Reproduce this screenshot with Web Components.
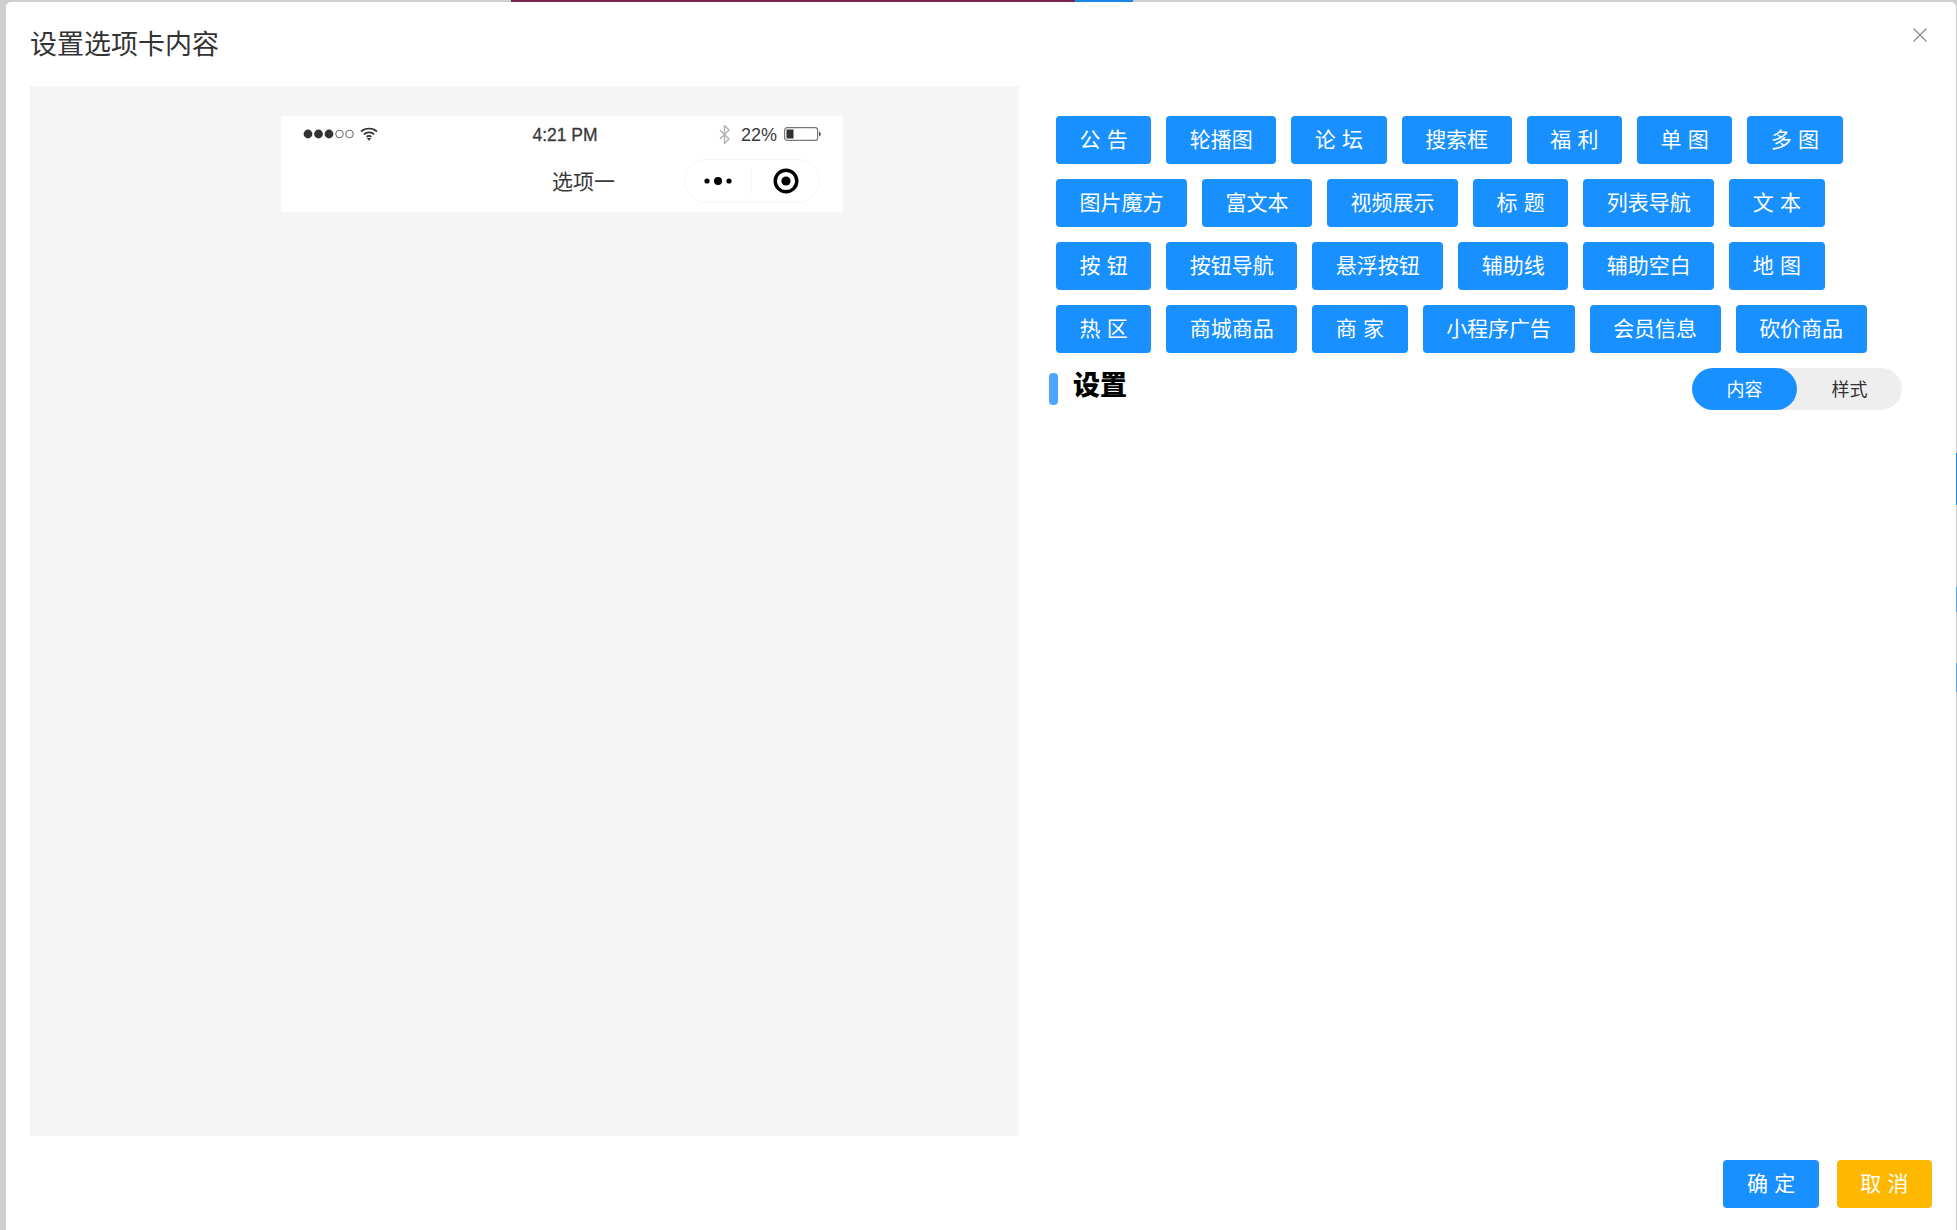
<!DOCTYPE html>
<html lang="zh">
<head>
<meta charset="utf-8">
<title>设置选项卡内容</title>
<style>
  html, body { margin: 0; height: 100%; }
  body {
    background: #cfcfcf;
    font-family: "Liberation Sans", "Noto Sans CJK SC", sans-serif;
    overflow: hidden;
  }
</style>
</head>
<body>

<c-backdrop>
  <c-dialog heading="设置选项卡内容">
    <c-phone slot="preview" tab="选项一"></c-phone>

    <c-palette slot="tools">
      <c-btn>公告</c-btn><c-btn>轮播图</c-btn><c-btn>论坛</c-btn><c-btn>搜索框</c-btn>
      <c-btn>福利</c-btn><c-btn>单图</c-btn><c-btn>多图</c-btn>
      <c-btn>图片魔方</c-btn><c-btn>富文本</c-btn><c-btn>视频展示</c-btn><c-btn>标题</c-btn>
      <c-btn>列表导航</c-btn><c-btn>文本</c-btn>
      <c-btn>按钮</c-btn><c-btn>按钮导航</c-btn><c-btn>悬浮按钮</c-btn><c-btn>辅助线</c-btn>
      <c-btn>辅助空白</c-btn><c-btn>地图</c-btn>
      <c-btn>热区</c-btn><c-btn>商城商品</c-btn><c-btn>商家</c-btn><c-btn>小程序广告</c-btn>
      <c-btn>会员信息</c-btn><c-btn>砍价商品</c-btn>
    </c-palette>

    <c-settings-head slot="tools"></c-settings-head>

    <c-btn slot="footer">确定</c-btn>
    <c-btn slot="footer" tone="warn">取消</c-btn>
  </c-dialog>
</c-backdrop>

<script>
/*
 *  Backdrop - grey page behind the dialog, with the bits of colour that peek out
 */
customElements.define('c-backdrop', class extends HTMLElement {
  constructor() {
    super()
    this.attachShadow({ mode: 'open' }).innerHTML = `
      <style>
        :host { display: block; position: relative; width: 1957px; height: 1230px; padding: 2px 1px 0 6px; box-sizing: border-box; }
        .peek { position: absolute; }
        .top { top: 0; height: 2px; }
        .side { right: 0; width: 1px; background: #1b86e6; }
      </style>
      <div class="peek top" style="left:511px;width:564px;background:#7a2350"></div>
      <div class="peek top" style="left:1075px;width:58px;background:#1b86e6"></div>
      <div class="peek side" style="top:453px;height:52px"></div>
      <div class="peek side" style="top:587px;height:25px;opacity:.7"></div>
      <div class="peek side" style="top:663px;height:29px;opacity:.7"></div>
      <slot></slot>
    `
  }
})

/*
 *  Dialog
 */
customElements.define('c-dialog', class extends HTMLElement {
  constructor() {
    super()
    this.attachShadow({ mode: 'open' }).innerHTML = `
      <style>
        :host { display: flex; flex-direction: column; height: 1228px; box-sizing: border-box; background: #fff; border-radius: 5px 5px 0 0; padding: 0 24px; position: relative; }
        h1 { margin: 0; height: 84px; padding-top: 27px; box-sizing: border-box; font-size: 27px; line-height: 32px; font-weight: 400; color: #333; }
        .close { position: absolute; top: 26px; right: 29px; width: 14px; height: 14px; }
        .body { display: flex; height: 1050px; }
        .preview { width: 989px; flex: none; background: #f5f5f5; padding: 30px 0 0 251px; box-sizing: border-box; }
        .tools { flex: 1; padding: 30px 0 0 37px; }
        .footer { display: flex; justify-content: flex-end; gap: 18px; margin-top: 24px; }
      </style>
      <h1></h1>
      <svg class="close" viewBox="0 0 14 14" fill="none" stroke="#8a8a8a" stroke-width="1.3"><path d="M.5.5l13 13M13.5.5l-13 13"/></svg>
      <div class="body">
        <div class="preview"><slot name="preview"></slot></div>
        <div class="tools"><slot name="tools"></slot></div>
      </div>
      <div class="footer"><slot name="footer"></slot></div>
    `
    this.shadowRoot.querySelector('h1').textContent = this.getAttribute('heading')
  }
})

/*
 *  Phone - status bar and title bar of the preview
 */
customElements.define('c-phone', class extends HTMLElement {
  constructor() {
    super()
    this.attachShadow({ mode: 'open' }).innerHTML = `
      <style>
        :host { display: block; width: 562px; height: 96px; background: #fff; color: #3a3a3a; }
        .status { display: grid; grid-template-columns: 1fr auto 1fr; align-items: center; height: 36px; padding: 0 22px; }
        .left { display: flex; align-items: center; gap: 6px; }
        .time { font-size: 17.5px; -webkit-text-stroke: .3px #3a3a3a; position: relative; left: 3px; top: 1px; }
        .right { display: flex; justify-content: flex-end; align-items: center; font-size: 18px; }
        .pct { margin: 0 7px 0 11px; position: relative; top: 1px; }
        .bar { display: grid; grid-template-columns: 1fr auto 1fr; align-items: center; height: 60px; padding: 0 23px 0 66px; }
        .tab { grid-column: 2; font-size: 21px; position: relative; top: -2px; }
        .capsule { grid-column: 3; justify-self: end; display: flex; align-items: center; width: 136px; height: 44px; box-sizing: border-box; border: 1px solid #f5f5f5; border-radius: 22px; position: relative; top: -1px; }
        .capsule > div { flex: 1; display: flex; align-items: center; justify-content: center; height: 26px; }
        .capsule > div + div { border-left: 1px solid #f5f5f5; padding-left: 2px; }
      </style>
      <div class="status">
        <div class="left">
          <svg width="51" height="12" viewBox="0 0 51 12"><g fill="#333"><circle cx="5" cy="6" r="4.4"/><circle cx="15.5" cy="6" r="4.4"/><circle cx="26" cy="6" r="4.4"/></g><g fill="none" stroke="#666"><circle cx="36.5" cy="6" r="3.8"/><circle cx="46.5" cy="6" r="3.8"/></g></svg>
          <svg width="18" height="14" viewBox="0 0 18 14" fill="none" stroke="#333" stroke-width="1.7"><path d="M1 4.5c4.500-4 11.500-4 16 0"/><path d="M3.800 7.300c2.900-2.500 7.500-2.500 10.400 0"/><path d="M6.500 9.800c1.400-1 3.600-1 5 0"/><path fill="#333" stroke="none" d="M6.800 11h4.400L9 13.800z"/></svg>
        </div>
        <div class="time">4:21 PM</div>
        <div class="right">
          <svg width="11" height="19" viewBox="0 0 11 19" fill="none" stroke="#b5b5b5" stroke-width="1.5"><path d="M1 5l9 9-4.500 4.500V.5L10 5l-9 9"/></svg>
          <span class="pct">22%</span>
          <svg width="37" height="14" viewBox="0 0 37 14"><rect x=".6" y=".6" width="33" height="12.800" rx="2.500" fill="#fff" stroke="#777" stroke-width="1.2"/><rect x="2.500" y="2.500" width="7" height="9" fill="#333"/><path d="M35 4.500c1.200.4 1.800 1.300 1.800 2.500s-.6 2.100-1.800 2.500z" fill="#555"/></svg>
        </div>
      </div>
      <div class="bar">
        <div class="tab"></div>
        <div class="capsule">
          <div><svg width="28" height="10" viewBox="0 0 28 10" fill="#000"><circle cx="3" cy="5" r="2.6"/><circle cx="14" cy="5" r="4"/><circle cx="25" cy="5" r="2.6"/></svg></div>
          <div><svg width="26" height="26" viewBox="0 0 26 26"><circle cx="13" cy="13" r="10.800" fill="none" stroke="#000" stroke-width="3.4"/><circle cx="13" cy="13" r="4.600" fill="#000"/></svg></div>
        </div>
      </div>
    `
    this.shadowRoot.querySelector('.tab').textContent = this.getAttribute('tab')
  }
})

/*
 *  Palette - wrapping list of component buttons
 */
customElements.define('c-palette', class extends HTMLElement {
  constructor() {
    super()
    this.attachShadow({ mode: 'open' }).innerHTML = `
      <style>
        :host { display: flex; flex-wrap: wrap; gap: 15px; width: 860px; }
      </style>
      <slot></slot>
    `
  }
})

/*
 *  Button - two character labels get the extra letter spacing
 */
customElements.define('c-btn', class extends HTMLElement {
  constructor() {
    super()
    this.attachShadow({ mode: 'open' }).innerHTML = `
      <style>
        :host { display: inline-flex; align-items: center; justify-content: center; height: 48px; box-sizing: border-box; padding: 0 23.5px 2px; border-radius: 4px; background: #1890ff; color: #fff; font-size: 21px; line-height: 1; white-space: nowrap; cursor: pointer; }
        :host([tone="warn"]) { background: #ffb800; }
        span { display: block; }
        .two { letter-spacing: .3em; margin-right: -.3em; }
      </style>
      <span><slot></slot></span>
    `
    if (this.textContent.trim().length === 2) {
      this.shadowRoot.querySelector('span').className = 'two'
    }
  }
})

/*
 *  Settings head - section title and the content / style switch
 */
customElements.define('c-settings-head', class extends HTMLElement {
  constructor() {
    super()
    this.attachShadow({ mode: 'open' }).innerHTML = `
      <style>
        :host { display: flex; align-items: flex-start; justify-content: space-between; margin: 15px 0 0 -7px; width: 853px; }
        .title { display: flex; align-items: center; gap: 15px; font-size: 27px; font-weight: 700; color: #000; margin-top: 5px; height: 32px; line-height: 32px; }
        .title i { display: block; width: 9px; height: 32px; border-radius: 4px; background: #4da6ff; }
        .title b { position: relative; top: -3px; }
        .switch { display: flex; width: 210px; height: 42px; border-radius: 21px; background: #eee; font-size: 18px; color: #333; }
        .switch div { display: flex; align-items: center; justify-content: center; padding-bottom: 2px; box-sizing: border-box; }
        .on { width: 105px; background: #1890ff; color: #fff; border-radius: 21px; }
        .off { flex: 1; }
      </style>
      <div class="title"><i></i><b>设置</b></div>
      <div class="switch"><div class="on">内容</div><div class="off">样式</div></div>
    `
  }
})
</script>
</body>
</html>
